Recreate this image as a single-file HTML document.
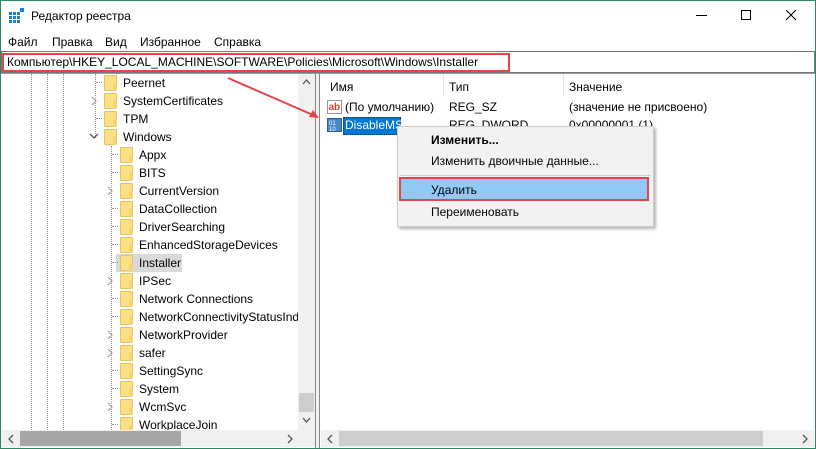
<!DOCTYPE html>
<html><head><meta charset="utf-8"><style>
*{margin:0;padding:0;box-sizing:border-box}
body{width:816px;height:449px;overflow:hidden;background:#fff;font-family:"Liberation Sans",sans-serif;font-size:12px;color:#000;position:relative}
.a{position:absolute;white-space:nowrap}
.fold{position:absolute;width:13px;height:16px;background:#fbe08a;border:1px solid #e8c25a;border-radius:1px}
.fold:after{content:"";position:absolute;right:-1px;bottom:-1px;width:4px;height:8px;background:#f6d36b}
.vd{position:absolute;width:0;border-left:1px dotted #999}
.hd{position:absolute;height:0;width:6px;border-top:1px dotted #999}
.chev{position:absolute;width:6px;height:10px}
</style></head><body>
<div class="a" style="left:0;top:0;width:816px;height:449px;border:1px solid #2a8a66"></div>
<svg class="a" style="left:9px;top:8px" width="16" height="16"><g fill="#1c7fd6"><rect x="0" y="4" width="3" height="3"/><rect x="4" y="4" width="3" height="3"/><rect x="8" y="4" width="3" height="3"/><rect x="0" y="8" width="3" height="3"/><rect x="4" y="8" width="3" height="3"/><rect x="8" y="8" width="3" height="3"/><rect x="0" y="12" width="3" height="3"/><rect x="4" y="12" width="3" height="3"/><rect x="8" y="12" width="3" height="3"/><rect x="11" y="0" width="4" height="4"/></g></svg>
<div class="a" style="left:31px;top:9px;font-size:12px">Редактор реестра</div>
<div class="a" style="left:696px;top:15px;width:11px;height:1px;background:#000"></div>
<div class="a" style="left:741px;top:10px;width:10px;height:10px;border:1px solid #000"></div>
<svg class="a" style="left:786px;top:10px" width="11" height="11"><path d="M0 0L10 10M10 0L0 10" stroke="#000" stroke-width="1"/></svg>
<div class="a" style="left:8px;top:35px">Файл</div>
<div class="a" style="left:52px;top:35px">Правка</div>
<div class="a" style="left:105px;top:35px">Вид</div>
<div class="a" style="left:140px;top:35px">Избранное</div>
<div class="a" style="left:214px;top:35px">Справка</div>
<div class="a" style="left:1px;top:51px;width:814px;height:22px;border:1px solid #777"></div>
<div class="a" style="left:2px;top:53px;width:508px;height:19px;border:2px solid #e8434b"></div>
<div class="a" style="left:7px;top:55px">Компьютер\HKEY_LOCAL_MACHINE\SOFTWARE\Policies\Microsoft\Windows\Installer</div>
<div class="a" style="left:1px;top:73px;width:814px;height:1px;background:#999"></div>
<div class="vd" style="left:31px;top:74px;height:356px"></div>
<div class="vd" style="left:47px;top:74px;height:356px"></div>
<div class="vd" style="left:63px;top:74px;height:356px"></div>
<div class="vd" style="left:95px;top:74px;height:64px"></div>
<div class="vd" style="left:111px;top:146px;height:284px"></div>
<div class="hd" style="left:96px;top:82px"></div>
<div class="hd" style="left:96px;top:118px"></div>
<svg class="chev" style="left:91px;top:96px"><path d="M1 1L5 5L1 9" stroke="#aaa" fill="none" stroke-width="1.3"/></svg>
<svg class="a" style="left:89px;top:132px" width="10" height="8"><path d="M1 2L5 6L9 2" stroke="#555" fill="none" stroke-width="1.3"/></svg>
<div class="fold" style="left:104px;top:75px"></div><div class="a" style="left:123px;top:76px">Peernet</div>
<div class="fold" style="left:104px;top:93px"></div><div class="a" style="left:123px;top:94px">SystemCertificates</div>
<div class="fold" style="left:104px;top:111px"></div><div class="a" style="left:123px;top:112px">TPM</div>
<div class="fold" style="left:104px;top:129px"></div><div class="a" style="left:123px;top:130px">Windows</div>
<div class="a" style="left:116px;top:254px;width:66px;height:18px;background:#d9d9d9"></div>
<div class="hd" style="left:112px;top:154px"></div><div class="fold" style="left:120px;top:147px"></div><div class="a" style="left:139px;top:148px">Appx</div>
<div class="hd" style="left:112px;top:172px"></div><div class="fold" style="left:120px;top:165px"></div><div class="a" style="left:139px;top:166px">BITS</div>
<svg class="chev" style="left:107px;top:186px"><path d="M1 1L5 5L1 9" stroke="#aaa" fill="none" stroke-width="1.3"/></svg><div class="fold" style="left:120px;top:183px"></div><div class="a" style="left:139px;top:184px">CurrentVersion</div>
<div class="hd" style="left:112px;top:208px"></div><div class="fold" style="left:120px;top:201px"></div><div class="a" style="left:139px;top:202px">DataCollection</div>
<div class="hd" style="left:112px;top:226px"></div><div class="fold" style="left:120px;top:219px"></div><div class="a" style="left:139px;top:220px">DriverSearching</div>
<div class="hd" style="left:112px;top:244px"></div><div class="fold" style="left:120px;top:237px"></div><div class="a" style="left:139px;top:238px">EnhancedStorageDevices</div>
<div class="hd" style="left:112px;top:262px"></div><div class="fold" style="left:120px;top:255px"></div><div class="a" style="left:139px;top:256px">Installer</div>
<svg class="chev" style="left:107px;top:276px"><path d="M1 1L5 5L1 9" stroke="#aaa" fill="none" stroke-width="1.3"/></svg><div class="fold" style="left:120px;top:273px"></div><div class="a" style="left:139px;top:274px">IPSec</div>
<div class="hd" style="left:112px;top:298px"></div><div class="fold" style="left:120px;top:291px"></div><div class="a" style="left:139px;top:292px">Network Connections</div>
<div class="hd" style="left:112px;top:316px"></div><div class="fold" style="left:120px;top:309px"></div><div class="a" style="left:139px;top:310px;width:159px;overflow:hidden">NetworkConnectivityStatusIndicator</div>
<svg class="chev" style="left:107px;top:330px"><path d="M1 1L5 5L1 9" stroke="#aaa" fill="none" stroke-width="1.3"/></svg><div class="fold" style="left:120px;top:327px"></div><div class="a" style="left:139px;top:328px">NetworkProvider</div>
<svg class="chev" style="left:107px;top:348px"><path d="M1 1L5 5L1 9" stroke="#aaa" fill="none" stroke-width="1.3"/></svg><div class="fold" style="left:120px;top:345px"></div><div class="a" style="left:139px;top:346px">safer</div>
<div class="hd" style="left:112px;top:370px"></div><div class="fold" style="left:120px;top:363px"></div><div class="a" style="left:139px;top:364px">SettingSync</div>
<div class="hd" style="left:112px;top:388px"></div><div class="fold" style="left:120px;top:381px"></div><div class="a" style="left:139px;top:382px">System</div>
<svg class="chev" style="left:107px;top:402px"><path d="M1 1L5 5L1 9" stroke="#aaa" fill="none" stroke-width="1.3"/></svg><div class="fold" style="left:120px;top:399px"></div><div class="a" style="left:139px;top:400px">WcmSvc</div>
<div class="hd" style="left:112px;top:424px"></div><div class="fold" style="left:120px;top:417px"></div><div class="a" style="left:139px;top:418px;height:12px;overflow:hidden">WorkplaceJoin</div>
<div class="a" style="left:298px;top:74px;width:17px;height:356px;background:#f0f0f0"></div>
<svg class="a" style="left:302px;top:79px" width="9" height="6"><path d="M1 5L4.5 1L8 5" stroke="#555" fill="none" stroke-width="1.3"/></svg>
<div class="a" style="left:299px;top:393px;width:15px;height:19px;background:#cdcdcd"></div>
<svg class="a" style="left:302px;top:417px" width="9" height="6"><path d="M1 1L4.5 5L8 1" stroke="#555" fill="none" stroke-width="1.3"/></svg>
<div class="a" style="left:1px;top:430px;width:314px;height:17px;background:#f0f0f0"></div>
<div class="a" style="left:20px;top:431px;width:161px;height:15px;background:#a6a6a6"></div>
<svg class="a" style="left:8px;top:434px" width="6" height="10"><path d="M5 1L1 5L5 9" stroke="#555" fill="none" stroke-width="1.3"/></svg>
<svg class="a" style="left:287px;top:434px" width="6" height="10"><path d="M1 1L5 5L1 9" stroke="#555" fill="none" stroke-width="1.3"/></svg>
<div class="a" style="left:315px;top:74px;width:5px;height:374px;background:#f0f0f0;border-left:1px solid #888;border-right:1px solid #888"></div>
<div class="a" style="left:330px;top:80px">Имя</div>
<div class="a" style="left:443px;top:74px;width:1px;height:22px;background:#e5e5e5"></div>
<div class="a" style="left:449px;top:80px">Тип</div>
<div class="a" style="left:563px;top:74px;width:1px;height:22px;background:#e5e5e5"></div>
<div class="a" style="left:569px;top:80px">Значение</div>
<svg class="a" style="left:327px;top:99px" width="16" height="16"><rect x="0.5" y="1.5" width="14" height="13" fill="#fff" stroke="#999"/><text x="1.5" y="11" font-family="Liberation Sans" font-size="10" font-weight="bold" fill="#d8452b">ab</text></svg>
<div class="a" style="left:345px;top:100px">(По умолчанию)</div>
<div class="a" style="left:449px;top:100px">REG_SZ</div>
<div class="a" style="left:569px;top:100px">(значение не присвоено)</div>
<svg class="a" style="left:327px;top:117px" width="16" height="16"><rect x="0.5" y="1.5" width="14" height="13" fill="#4a86c8" stroke="#2c5f9a"/><text x="2" y="8" font-family="Liberation Sans" font-size="6" fill="#fff">01</text><text x="2" y="14" font-family="Liberation Sans" font-size="6" fill="#fff">10</text></svg>
<div class="a" style="left:343px;top:117px;width:58px;height:18px;background:#0078d7;border:1px dotted #333"></div>
<div class="a" style="left:345px;top:118px;color:#fff">DisableMSI</div>
<div class="a" style="left:449px;top:118px">REG_DWORD</div>
<div class="a" style="left:569px;top:118px">0x00000001 (1)</div>
<div class="a" style="left:397px;top:126px;width:257px;height:101px;background:#f2f2f2;border:1px solid #ccc;box-shadow:2px 2px 3px rgba(0,0,0,.3)"></div>
<div class="a" style="left:431px;top:133px;font-weight:bold">Изменить...</div>
<div class="a" style="left:431px;top:154px">Изменить двоичные данные...</div>
<div class="a" style="left:400px;top:175px;width:251px;height:1px;background:#ccc"></div>
<div class="a" style="left:401px;top:179px;width:246px;height:20px;background:#91c9f7"></div>
<div class="a" style="left:399px;top:177px;width:250px;height:24px;border:2px solid #e8434b"></div>
<div class="a" style="left:431px;top:183px">Удалить</div>
<div class="a" style="left:431px;top:205px">Переименовать</div>
<div class="a" style="left:321px;top:430px;width:493px;height:17px;background:#f0f0f0"></div>
<div class="a" style="left:339px;top:431px;width:424px;height:15px;background:#cdcdcd"></div>
<svg class="a" style="left:327px;top:434px" width="6" height="10"><path d="M5 1L1 5L5 9" stroke="#555" fill="none" stroke-width="1.3"/></svg>
<svg class="a" style="left:802px;top:434px" width="6" height="10"><path d="M1 1L5 5L1 9" stroke="#555" fill="none" stroke-width="1.3"/></svg>
<svg class="a" style="left:0;top:0" width="816" height="449"><line x1="228" y1="78" x2="313" y2="115" stroke="#e8434b" stroke-width="2"/><path d="M319 118L309 117L313 110Z" fill="#e8434b"/></svg>
</body></html>
